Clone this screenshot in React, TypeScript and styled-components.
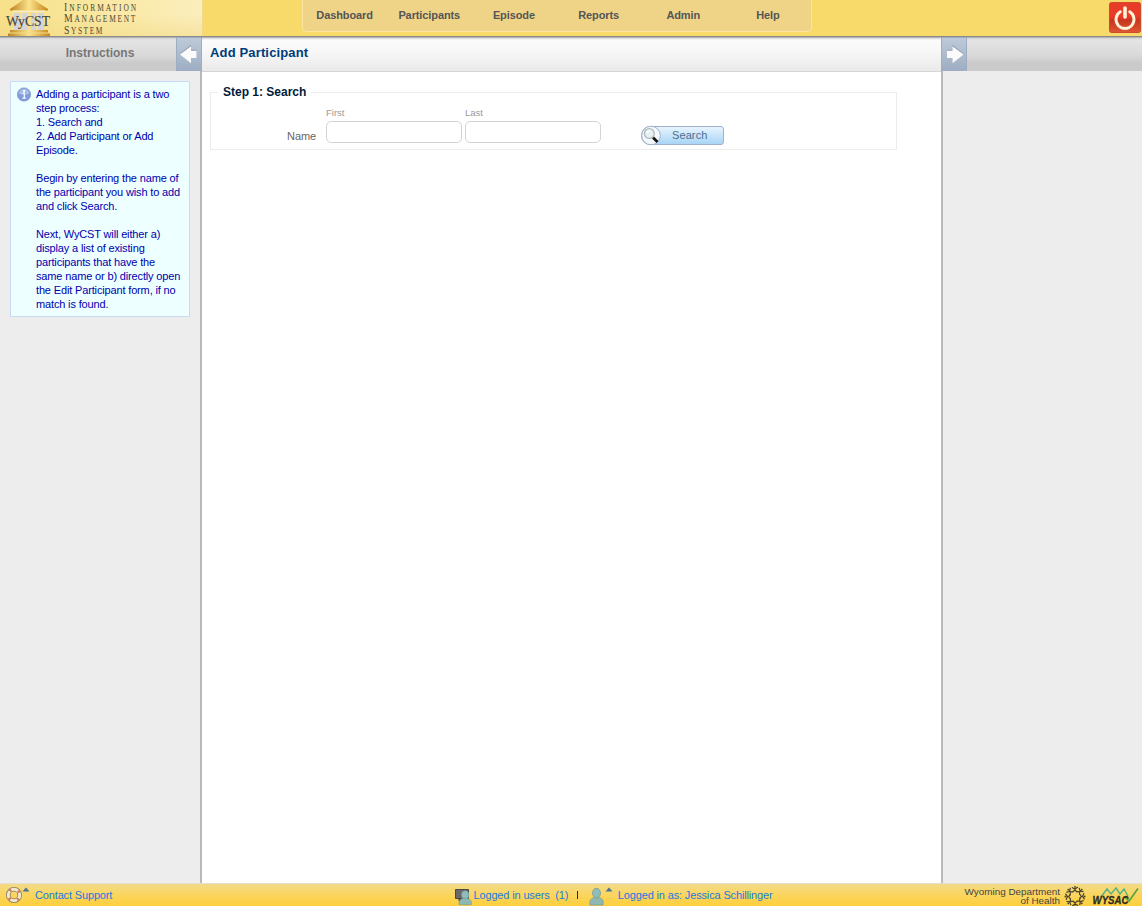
import React from "react";
import styled, { createGlobalStyle } from "styled-components";

const GlobalStyle = createGlobalStyle`
  * { box-sizing: border-box; }
  body { margin: 0; background: #fff; font-family: "Liberation Sans", Arial, sans-serif; font-size: 11px; overflow: hidden; }
`;

const Page = styled.div`
  display: flex;
  flex-direction: column;
  height: 906px;
  width: 1142px;
`;

const Header = styled.header`
  display: flex;
  height: 36px;
  flex: none;
  background: #f8da6b;
`;
const Brand = styled.div`
  display: flex;
  width: 203px;
  height: 36px;
  background: linear-gradient(180deg, rgba(240,215,130,0) 40%, rgba(240,215,130,.45) 100%), linear-gradient(90deg, #f8e08a 0%, #f9e699 35%, #fbeebd 100%);
  border-right: 1px solid #f5d98a;
`;
const BrandLogo = styled.svg`
  flex: none;
  width: 60px;
  height: 36px;
`;
const BrandName = styled.div`
  padding: 1.5px 0 0 4px;
  font-family: "Liberation Serif", serif;
  color: #4f4936;
`;
const BrandLine = styled.div<{ $gap: number }>`
  height: 11.5px;
  line-height: 11.5px;
  font-size: 9.5px;
  letter-spacing: ${(p) => p.$gap}px;
  white-space: nowrap;
  transform: scaleX(0.78);
  transform-origin: 0 0;
  &::first-letter { font-size: 12.5px; line-height: 11.5px; }
`;
const Nav = styled.nav`
  display: flex;
  width: 510px;
  height: 32px;
  margin-left: 99px;
  background: #efd488;
  border: 1px solid #fae6a0;
  border-top: 0;
  border-radius: 0 0 5px 5px;
`;
const NavItem = styled.a`
  flex: 1 0 0;
  padding-right: 1.5px;
  text-align: center;
  line-height: 31px;
  font-size: 11px;
  font-weight: bold;
  letter-spacing: -0.1px;
  color: #555;
`;
const Power = styled.svg`
  width: 32px;
  height: 32px;
  margin: 2px 1px 0 auto;
`;

const Columns = styled.div`
  display: flex;
  flex: 1;
  background: #ededed;
`;
const Side = styled.aside<{ $width: number }>`
  width: ${(p) => p.$width}px;
  display: flex;
  flex-direction: column;
`;
const Center = styled.main`
  width: 739px;
  background: #fff;
`;
const Divider = styled.div`
  width: 2px;
  background: linear-gradient(180deg, #858585 1px, #b9b9b9 1px);
`;
const shadow = "linear-gradient(180deg, #858585 0, #8f8f8f 1px, #b4b4b4 1px, #b4b4b4 2px, rgba(205,205,205,.8) 2px, rgba(220,220,220,0) 4px)";
const SideBar = styled.div`
  display: flex;
  height: 35px;
  flex: none;
  background: ${shadow}, linear-gradient(180deg, #e7e7e7 0, #d9d9d9 55%, #cacaca 78%, #cbcbcb 100%);
`;
const SideTitle = styled.h2`
  flex: none;
  margin: 0;
  width: 176px;
  padding-left: 24px;
  text-align: center;
  font-size: 12px;
  line-height: 34px;
  color: #777;
`;
const Toggle = styled.button`
  position: relative;
  z-index: 1;
  flex: none;
  width: 26px;
  height: 34px;
  margin-top: 1px;
  padding: 0;
  border: 1px solid #9cadc5;
  background: linear-gradient(180deg, #becad8, #9eaec3);
  svg { display: block; }
`;
const RightToggle = styled(Toggle)`
  margin-left: -2px;
`;
const TitleBar = styled.div`
  height: 36px;
  border-bottom: 1px solid #d5d5d5;
  background: ${shadow}, linear-gradient(180deg, #fcfcfc 0, #f8f8f8 40%, #eaeaea 100%);
`;
const Title = styled.h1`
  margin: 0;
  padding-left: 8px;
  font-size: 13px;
  line-height: 33px;
  letter-spacing: 0.15px;
  color: #003b79;
`;

const Note = styled.section`
  display: flex;
  width: 180px;
  height: 236px;
  margin: 10px 0 0 10px;
  padding: 5px 0 0 6px;
  background: #edffff;
  border: 1px solid #c8daf8;
`;
const NoteText = styled.div`
  padding-left: 4px;
  color: #0000ae;
  line-height: 14px;
  letter-spacing: -0.15px;
  white-space: nowrap;
  p { margin: 0 0 14px; }
`;
const InfoIcon = styled.svg`
  flex: none;
  width: 15px;
  height: 15px;
`;

const Step = styled.fieldset`
  display: flex;
  width: 687px;
  height: 65px;
  margin: 13px 0 0 8px;
  padding: 0;
  border: 1px solid #ececec;
`;
const Legend = styled.legend`
  margin-left: 7px;
  padding: 0 5px;
  font-size: 12px;
  line-height: 14px;
  font-weight: bold;
  color: #001b3a;
`;
const NameLabel = styled.label`
  width: 105px;
  padding-top: 30px;
  text-align: right;
  line-height: 14px;
  font-size: 11px;
  letter-spacing: -0.1px;
  color: #666;
`;
const Field = styled.label`
  display: block;
  padding-top: 7px;
  font-size: 9.5px;
  line-height: 14px;
  color: #999;
`;
const Input = styled.input`
  display: block;
  width: 136px;
  height: 22px;
  margin: 1px 0 0;
  border: 1px solid #d3d3d3;
  border-radius: 5px;
  background: #fff;
`;
const Fields = styled.div`
  display: flex;
  gap: 3px;
  margin-left: 10px;
`;
const SearchButton = styled.button`
  display: flex;
  align-items: center;
  width: 83px;
  height: 19px;
  margin: 27px 0 0 40px;
  padding: 0;
  border: 1px solid #9fb0cf;
  border-radius: 9px 3px 3px 9px;
  background: linear-gradient(180deg, #e8f4fe, #a9d5f5);
  font: 11px "Liberation Sans", sans-serif;
  letter-spacing: 0.1px;
  color: #4d6d92;
  svg { flex: none; margin: 0 10px 0 -1px; }
  span { padding-bottom: 2px; }
`;

const Footer = styled.footer`
  display: flex;
  flex: none;
  height: 23px;
  border-top: 1px solid #e3decd;
  background: linear-gradient(180deg, #f3da87 0, #fbd55a 55%, #fecf3c 100%);
`;
const FooterPart = styled.div<{ $width: number }>`
  display: flex;
  width: ${(p) => p.$width}px;
  line-height: 23px;
  letter-spacing: -0.15px;
  color: #1b7ae0;
  white-space: pre;
  svg { flex: none; }
`;
const FooterLink = styled.a<{ $indent?: number }>`
  padding-left: ${(p) => p.$indent ?? 0}px;
`;
const Bar = styled.span`
  width: 1px;
  height: 8px;
  margin: 7px 11px 0 9px;
  background: #402020;
`;
const Dept = styled.div`
  width: 97px;
  padding-top: 3px;
  text-align: right;
  white-space: nowrap;
  font-size: 9.9px;
  line-height: 9px;
  color: #444;
`;

const menu = ["Dashboard", "Participants", "Episode", "Reports", "Admin", "Help"];

const Logo = () => (
  <BrandLogo viewBox="0 0 60 36">
    <defs>
      <linearGradient id="gold" x1="0" x2="1">
        <stop offset="0" stopColor="#bd8420" />
        <stop offset=".5" stopColor="#fbe38c" />
        <stop offset="1" stopColor="#c68517" />
      </linearGradient>
    </defs>
    <path d="M23 0H34L48 9V10.500H10V9Z" fill="url(#gold)" />
    <path d="M13 10.500H45V12H13Z" fill="#f7ebc4" />
    <path d="M14 13h6v17h-6zM22 13h5v17h-5zM31 13h5v17h-5zM38 13h6v17h-6z" fill="#d3d5d8" />
    <path d="M10 30H48V32.500H10ZM8 33.500H50V36H8Z" fill="url(#gold)" />
    <text x="6" y="25.500" fontFamily="Liberation Serif" fontSize="15.500" fill="#44443e" stroke="#44443e" strokeWidth=".15" textLength="44" lengthAdjust="spacingAndGlyphs">WyCST</text>
  </BrandLogo>
);

const Arrow = ({ flip = false }: { flip?: boolean }) => (
  <svg width="24" height="32" viewBox="0 0 24 32">
    <g transform={flip ? "translate(24.500 0) scale(-1 1)" : undefined}>
      <path d="M3 16L14 7V12H19.500V20H14V25Z" fill="#8f9db0" transform="translate(0 -.3)" />
      <path d="M3 16.500L14 8.200V12.800H19.500V20H14V25.300Z" fill="#fbfbfb" />
    </g>
  </svg>
);

const Person = ({ monitor = false }: { monitor?: boolean }) => (
  <svg width={monitor ? 18 : 16} height="22" viewBox={monitor ? "0 0 18 22" : "0 0 16 22"}>
    {monitor && <path d="M.5 5.500H13.500V14.500H.5ZM4 15H9V17H4Z" fill="#686868" stroke="#484848" />}
    <g transform={monitor ? "translate(3.300 6) scale(.92 .8)" : "translate(0 3.300) scale(1 .96)"}>
      <path d="M1 18.500C0 13 3 11 5.500 10.500H9.500C13 11 15 14 14 18.500Z" fill="#8fb8b3" stroke="#7c9c91" strokeWidth=".8" />
      <ellipse cx="7.500" cy="6" rx="4" ry="5" fill="#8fbdbb" stroke="#799c97" strokeWidth=".8" />
    </g>
  </svg>
);

const Caret = () => (
  <svg width="8" height="22" viewBox="0 0 8 22"><path d="M.5 7.500L4 3.500L7.500 7.500Z" fill="#4d7298" /></svg>
);

export default function App() {
  return (
    <Page>
      <GlobalStyle />
      <Header>
        <Brand>
          <Logo />
          <BrandName>
            <BrandLine $gap={2.6}>INFORMATION</BrandLine>
            <BrandLine $gap={2.25}>MANAGEMENT</BrandLine>
            <BrandLine $gap={2}>SYSTEM</BrandLine>
          </BrandName>
        </Brand>
        <Nav>{menu.map((m) => <NavItem key={m}>{m}</NavItem>)}</Nav>
        <Power viewBox="0 0 32 32">
          <defs>
            <linearGradient id="red" x2="0" y2="1">
              <stop stopColor="#e33d28" /><stop offset=".45" stopColor="#ed3b28" />
              <stop offset=".6" stopColor="#c83620" /><stop offset="1" stopColor="#df5733" />
            </linearGradient>
          </defs>
          <rect x=".5" y=".5" width="31" height="30" rx="2" fill="url(#red)" stroke="#cf492b" />
          <path d="M11.300 9.800A9 9 0 1 0 20.700 9.800" fill="none" stroke="#fff3d8" strokeWidth="2.900" strokeLinecap="round" />
          <path d="M16 6V15" stroke="#fff3d8" strokeWidth="3.600" strokeLinecap="round" />
        </Power>
      </Header>

      <Columns>
        <Side $width={200}>
          <SideBar>
            <SideTitle>Instructions</SideTitle>
            <Toggle aria-label="Collapse instructions"><Arrow /></Toggle>
          </SideBar>
          <Note>
            <InfoIcon viewBox="0 0 15 15">
              <circle cx="7" cy="7.500" r="6.600" fill="#7f9edb" stroke="#7f96c8" strokeWidth=".8" />
              <path d="M1.500 6.500A5.600 5.600 0 0 1 12.500 6.500Q7 9 1.500 6.500" fill="#a6bdea" />
              <path d="M5.500 6.200H7.300V11M5.500 11.200H8.800" fill="none" stroke="#fff" strokeWidth="1.200" />
              <circle cx="7.100" cy="3.900" r="1.100" fill="#fff" />
            </InfoIcon>
            <NoteText>
              <p>Adding a participant is a two<br />step process:<br />1. Search and<br />2. Add Participant or Add<br />Episode.</p>
              <p>Begin by entering the name of<br />the participant you wish to add<br />and click Search.</p>
              <p>Next, WyCST will either a)<br />display a list of existing<br />participants that have the<br />same name or b) directly open<br />the Edit Participant form, if no<br />match is found.</p>
            </NoteText>
          </Note>
        </Side>
        <Divider />
        <Center>
          <TitleBar><Title>Add Participant</Title></TitleBar>
          <Step>
            <Legend>Step 1: Search</Legend>
            <NameLabel>Name</NameLabel>
            <Fields>
              <Field>First<Input /></Field>
              <Field>Last<Input /></Field>
            </Fields>
            <SearchButton>
              <svg width="21" height="21" viewBox="0 0 21 21">
                <circle cx="10" cy="10.500" r="9.300" fill="#f3f8fc" stroke="#a5b2cc" />
                <path d="M12 12.500L16.500 17" stroke="#111" strokeWidth="2.600" />
                <circle cx="8.300" cy="8.500" r="4.900" fill="#e6eff2" stroke="#b4babb" strokeWidth="1.300" />
                <path d="M5.800 8Q6.800 5.500 9.300 5.700" fill="none" stroke="#fff" strokeWidth="1.500" />
              </svg>
              <span>Search</span>
            </SearchButton>
          </Step>
        </Center>
        <Divider />
        <Side $width={199}>
          <SideBar><RightToggle aria-label="Expand panel"><Arrow flip /></RightToggle></SideBar>
        </Side>
      </Columns>

      <Footer>
        <FooterPart $width={455}>
          <svg width="22" height="22" viewBox="0 0 22 22">
            <circle cx="14" cy="11" r="5.700" fill="none" stroke="#8b8069" strokeWidth="4.600" />
            <circle cx="14" cy="11" r="5.700" fill="none" stroke="#f2e8cb" strokeWidth="3" />
            <circle cx="14" cy="11" r="5.700" fill="none" stroke="#d9785c" strokeWidth="3" strokeDasharray="2 6.950" strokeDashoffset="-3.500" />
          </svg>
          <Caret />
          <FooterLink $indent={5}>Contact Support</FooterLink>
        </FooterPart>
        <FooterPart $width={508}>
          <Person monitor />
          <FooterLink $indent={0.5}>Logged in users  (1)</FooterLink>
          <Bar />
          <Person /><Caret />
          <FooterLink $indent={4.5}>Logged in as: Jessica Schillinger</FooterLink>
        </FooterPart>
        <Dept>Wyoming Department<br />of Health</Dept>
        <svg width="82" height="22" viewBox="0 0 82 22">
          <g transform="translate(15 12.500)" fill="none" stroke="#49422d" strokeWidth="1.200">
            {[0, 45, 90, 135, 180, 225, 270, 315].map((a) => (
              <g key={a} transform={`rotate(${a})`}>
                <path d="M-2.500 -4.500L0 -6.500L2 -4.500M0 -6V-8.500M-3.200 -9L0 -7.500L2.800 -9.500" />
                <circle cx="0" cy="-9.600" r=".9" fill="#49422d" stroke="none" />
              </g>
            ))}
          </g>
          <path d="M41 13L47 5L51 10L56 4L60 10L64 5L68 12" fill="none" stroke="#55b286" strokeWidth="1.400" />
          <path d="M65 13L69 17L78 4.500" fill="none" stroke="#5fa548" strokeWidth="1.800" />
          <text x="32.500" y="19.700" fontFamily="Liberation Sans" fontSize="11.500" fontStyle="italic" fontWeight="bold" fill="#2b291d" stroke="#2b291d" strokeWidth=".3" textLength="36" lengthAdjust="spacingAndGlyphs">WYSAC</text>
        </svg>
      </Footer>
    </Page>
  );
}
